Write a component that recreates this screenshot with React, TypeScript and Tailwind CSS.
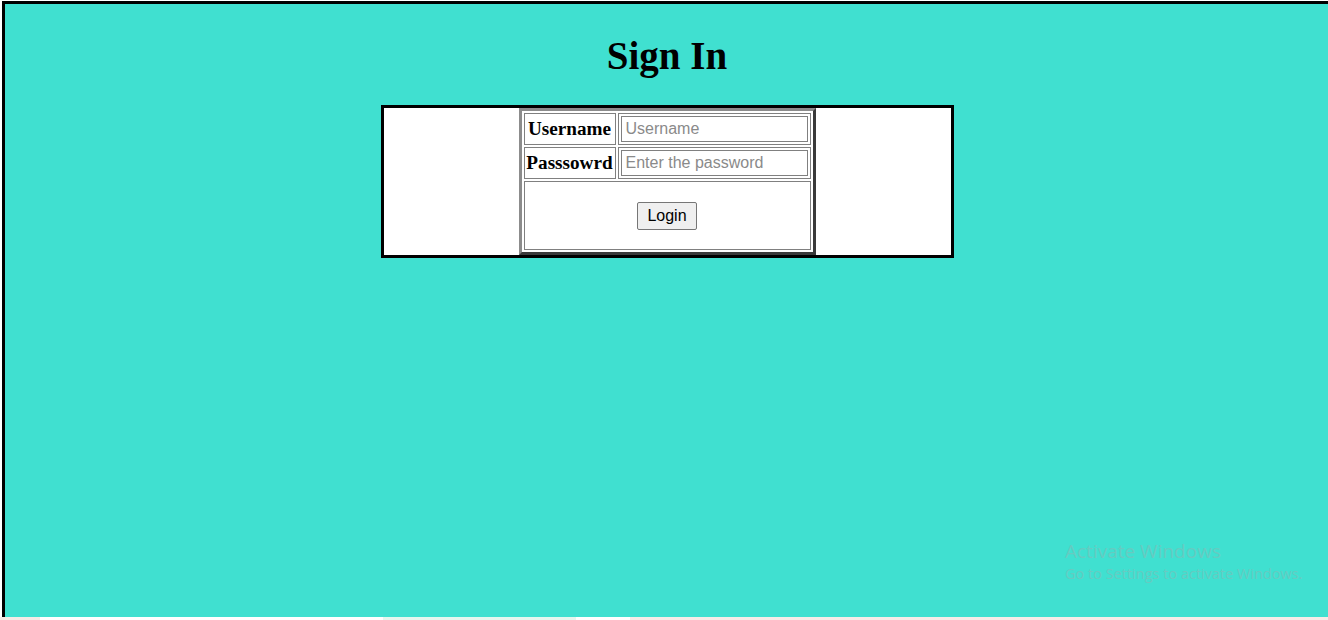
export default function App() {
  return (
    <div className="relative h-[620px] w-full overflow-hidden bg-white">
      <div className="ml-[2px] mt-[1px] h-[616px] w-[1330px] border-[3px] border-b-0 border-black bg-[#40E0D0]">
        <h1 className="pt-[29px] text-center font-['Liberation_Serif',serif] text-[39px] font-bold leading-[45px] text-black">
          Sign In
        </h1>

        <div className="mx-auto mt-[27px] w-[573px] border-[3px] border-black bg-white">
          <table className="mx-auto border-separate border-spacing-[2px] border-[3px] border-t-[#8c8c8c] border-l-[#8c8c8c] border-r-[#3a3a3a] border-b-[#3a3a3a] font-['Liberation_Serif',serif]">
            <tbody>
              <tr>
                <td className="h-[32px] w-[92px] border border-[#808080] px-[2px] text-center align-middle text-[19.2px] font-bold text-black">
                  Username
                </td>
                <td className="h-[32px] w-[193px] border border-[#808080] p-[2px]">
                  <input
                    type="text"
                    placeholder="Username"
                    className="block h-[26px] w-[187px] border border-[#808080] bg-white px-[4px] font-['Liberation_Sans',Arial,sans-serif] text-[16px] text-black outline-none placeholder:text-[#8a8a8a]"
                  />
                </td>
              </tr>
              <tr>
                <td className="h-[32px] w-[92px] border border-[#808080] px-[1px] text-center align-middle text-[19.2px] font-bold text-black">
                  Passsowrd
                </td>
                <td className="h-[32px] w-[193px] border border-[#808080] p-[2px]">
                  <input
                    type="password"
                    placeholder="Enter the password"
                    className="block h-[26px] w-[187px] border border-[#808080] bg-white px-[4px] font-['Liberation_Sans',Arial,sans-serif] text-[16px] text-black outline-none placeholder:text-[#8a8a8a]"
                  />
                </td>
              </tr>
              <tr>
                <td colSpan={2} className="h-[69px] border border-[#808080] text-center align-middle">
                  <button
                    type="button"
                    className="h-[28px] w-[60px] rounded-[2px] border border-[#767676] bg-[#efefef] font-['Liberation_Sans',Arial,sans-serif] text-[16px] text-black"
                  >
                    Login
                  </button>
                </td>
              </tr>
            </tbody>
          </table>
        </div>
      </div>

      <div className="flex h-[3px] w-full">
        <div className="w-[40px] bg-[#f5ebe6]" />
        <div className="w-[343px] bg-white" />
        <div className="w-[193px] bg-[#e6f7ef]" />
        <div className="w-[54px] bg-white" />
        <div className="flex-1 bg-[#f7ece8]" />
      </div>

      <div className="absolute left-[1065px] top-[539px] font-['Open_Sans','Noto_Sans',sans-serif] text-[#66cbc1]">
        <div className="text-[19px] leading-[24px]">Activate Windows</div>
        <div className="text-[14.5px] leading-[22px]">Go to Settings to activate Windows.</div>
      </div>
    </div>
  );
}
